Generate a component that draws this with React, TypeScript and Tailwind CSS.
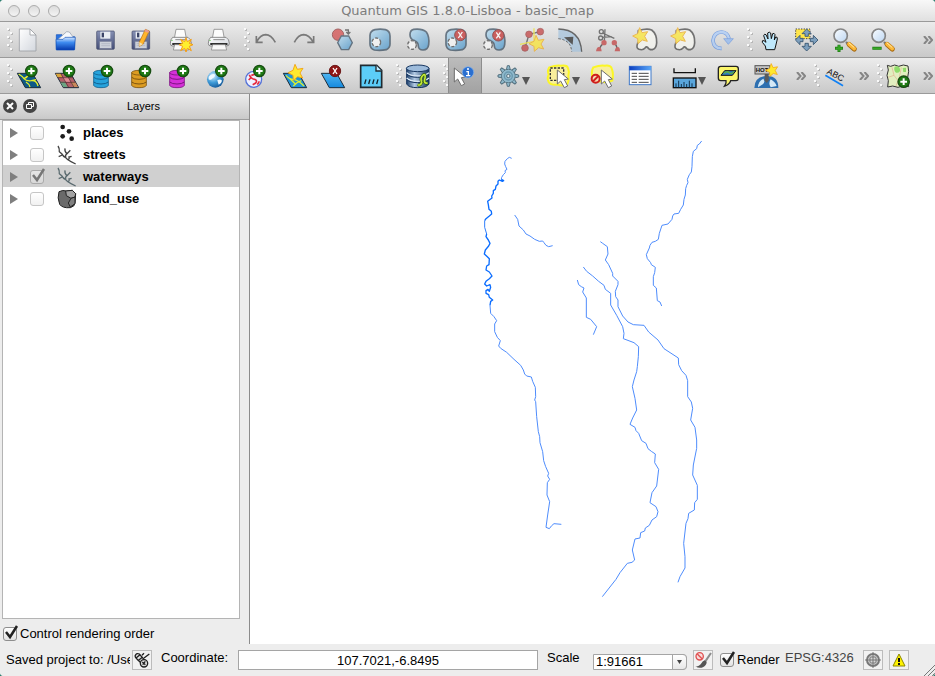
import React, { useState } from "react";
import type { ReactNode } from "react";

/* ---------- icon building blocks (72-unit grid) ---------- */

function Icon({ children, faded = false }: { children: ReactNode; faded?: boolean }) {
  return (
    <svg viewBox="0 0 72 72" className={faded ? "size-6 shrink-0 overflow-visible opacity-70" : "size-6 shrink-0 overflow-visible"} aria-hidden="true">
      {children}
    </svg>
  );
}

function Star({ x, y, s = 1 }: { x: number; y: number; s?: number }) {
  return (
    <path
      transform={`translate(${x} ${y}) scale(${s})`}
      d="M-3-24L4-9L21-12L12 2L20 17L5 13L-8 24L-9 9L-24 1L-9-6Z"
      fill="#ffe92e"
      stroke="#f2a81c"
      strokeWidth="3"
      strokeLinejoin="round"
    />
  );
}

function AddBadge({ x = 46, y = 21 }: { x?: number; y?: number }) {
  return (
    <g>
      <circle cx={x} cy={y} r="17" fill="#1f7a14" stroke="#174d12" strokeWidth="4" />
      <path d={`M${x - 10} ${y}H${x + 10}M${x} ${y - 10}V${y + 10}`} stroke="#fff" strokeWidth="6" />
    </g>
  );
}

function RemoveBadge({ x, y, fill = "#c22a2a" }: { x: number; y: number; fill?: string }) {
  return (
    <g>
      <circle cx={x} cy={y} r="17" fill={fill} stroke="#6d1a1a" strokeWidth="3" />
      <path d={`M${x - 6} ${y - 9}L${x + 6} ${y + 9}M${x + 6} ${y - 9}L${x - 6} ${y + 9}`} stroke="#fff" strokeWidth="4" />
    </g>
  );
}

function DashedRing({ x, y }: { x: number; y: number }) {
  return <circle cx={x} cy={y} r="13" fill="#fafafa" stroke="#444" strokeWidth="4" strokeDasharray="9 5" />;
}

function Cursor({ x, y }: { x: number; y: number }) {
  return (
    <path
      transform={`translate(${x} ${y})`}
      d="M0 0V42L10 33L21 53L31 48L21 29L33 27Z"
      fill="#fff"
      stroke="#6d6d6d"
      strokeWidth="3"
      strokeLinejoin="round"
    />
  );
}

function Floppy({ x }: { x: number }) {
  return (
    <g transform={`translate(${x} 9)`}>
      <rect width="53" height="55" rx="3" fill="url(#floppy)" stroke="#3f4766" strokeWidth="2" />
      <rect x="11" y="2" width="30" height="21" fill="#e9edf3" />
      <rect x="15" y="5" width="7" height="14" fill="#3b4468" />
      <rect x="9" y="31" width="36" height="21" fill="#cdd1da" stroke="#7a809a" strokeWidth="2" />
      <path d="M14 38H40M14 44H40" stroke="#a9afbd" strokeWidth="2" />
    </g>
  );
}

function Printer() {
  return (
    <g>
      <path d="M24 4H50L55 32H19Z" fill="#fcfcfc" stroke="#8c8c8c" strokeWidth="2.5" />
      <path d="M14 28H60Q70 34 70 46Q70 54 62 54H14Q7 54 7 46Q7 34 14 28Z" fill="url(#paper)" stroke="#777" strokeWidth="2.5" />
      <path d="M22 35H56" stroke="#8b8b8b" strokeWidth="3" />
      <path d="M15 48H62" stroke="#2f2f2f" strokeWidth="6" strokeLinecap="round" />
      <path d="M20 50H58L62 66H16Z" fill="#f8f8f8" stroke="#8c8c8c" strokeWidth="2.5" />
      <circle cx="12" cy="37" r="2" fill="#4fc03a" />
    </g>
  );
}

function Database({ fill, dark }: { fill: string; dark: string }) {
  return (
    <g stroke={dark} strokeWidth="2.5">
      <path d="M5 26V64Q8 71 27 71Q46 71 49 64V26Z" fill={fill} />
      <ellipse cx="27" cy="26" rx="22" ry="7" fill={fill} />
      <path d="M5 40Q12 46 27 46T49 40M5 54Q12 60 27 60T49 54" fill="none" strokeWidth="3" />
    </g>
  );
}

function Sheet({ fill, children }: { fill: string; children?: ReactNode }) {
  return (
    <g>
      <path d="M4 28H50L74 71H28Z" fill={fill} stroke="#1c2c3a" strokeWidth="3" />
      {children}
    </g>
  );
}

const blob = "M24 5Q40 2 55 5Q69 9 69 24V48Q69 60 58 65Q40 69 22 66Q9 62 9 48V22Q10 8 24 5Z";
const bean = "M26 4Q52 1 64 12Q74 26 71 50Q69 66 54 66Q41 66 40 54Q40 42 29 38Q15 34 15 20Q15 7 26 4Z";
const cloud = "M16 8Q42 0 56 6Q72 18 71 44Q70 62 58 65Q48 66 44 58Q40 54 36 60Q30 68 18 64Q8 60 14 46Q22 38 14 28Z";
const glow = "M10 10Q30 3 44 5Q64 2 66 12Q71 24 67 36Q70 54 62 62Q48 67 34 62Q14 64 8 54Q2 42 8 32Q3 20 10 10Z";

function Magnifier({ children }: { children: ReactNode }) {
  return (
    <g>
      <path d="M42 42L50 50" stroke="#777" strokeWidth="7" />
      <path d="M51 49L67 63" stroke="#a86a12" strokeWidth="15" strokeLinecap="round" />
      <path d="M51 48L67 62" stroke="#fbb736" strokeWidth="11" strokeLinecap="round" />
      <path d="M51 45L66 58" stroke="#ffe8a8" strokeWidth="3" strokeLinecap="round" />
      <circle cx="26" cy="23" r="20" fill="url(#lens)" stroke="#858585" strokeWidth="5" />
      {children}
    </g>
  );
}

function SharedPaint() {
  return (
    <svg className="absolute size-0" aria-hidden="true">
      <defs>
        <linearGradient id="floppy" x1="0" y1="0" x2="0" y2="1">
          <stop offset="0" stopColor="#8791b4" />
          <stop offset="1" stopColor="#454e78" />
        </linearGradient>
        <linearGradient id="paper" x1="0" y1="0" x2="1" y2="1">
          <stop offset="0" stopColor="#ffffff" />
          <stop offset="1" stopColor="#d3d7de" />
        </linearGradient>
        <linearGradient id="folder" x1="0" y1="0" x2="0" y2="1">
          <stop offset="0" stopColor="#d5e7ff" />
          <stop offset="0.4" stopColor="#3f8cf0" />
          <stop offset="1" stopColor="#0538ac" />
        </linearGradient>
        <linearGradient id="lens" x1="0" y1="0" x2="1" y2="1">
          <stop offset="0" stopColor="#fafdff" />
          <stop offset="1" stopColor="#bcd6f2" />
        </linearGradient>
        <linearGradient id="shape" x1="0" y1="0" x2="1" y2="1">
          <stop offset="0" stopColor="#b5dcf3" />
          <stop offset="1" stopColor="#3d8fc9" />
        </linearGradient>
        <linearGradient id="sky" x1="0" y1="0" x2="0" y2="1">
          <stop offset="0" stopColor="#4fb6f2" />
          <stop offset="1" stopColor="#1489de" />
        </linearGradient>
        <radialGradient id="globe" cx="0.35" cy="0.3" r="0.8">
          <stop offset="0" stopColor="#d6f0ff" />
          <stop offset="0.5" stopColor="#3f9bd8" />
          <stop offset="1" stopColor="#0f4f8f" />
        </radialGradient>
        <linearGradient id="steel" x1="0" y1="0" x2="1" y2="0">
          <stop offset="0" stopColor="#1c3f6c" />
          <stop offset="0.35" stopColor="#b3cbe4" />
          <stop offset="1" stopColor="#15365f" />
        </linearGradient>
        <linearGradient id="head" x1="0" y1="0" x2="1" y2="0">
          <stop offset="0" stopColor="#0c3fc0" />
          <stop offset="1" stopColor="#58a6f8" />
        </linearGradient>
      </defs>
    </svg>
  );
}

/* ---------- toolbar contents ---------- */

type Tool = { label: string; art: ReactNode };

const fileTools: Tool[] = [
  {
    label: "New project",
    art: (
      <>
        <path d="M10 3H42L60 21V69H10Z" fill="url(#paper)" stroke="#9b9fa4" strokeWidth="2.5" />
        <path d="M42 3V21H60Z" fill="#fff" stroke="#9b9fa4" strokeWidth="2.5" />
      </>
    ),
  },
  {
    label: "Open project",
    art: (
      <>
        <path d="M7 20H24L29 26H62V64H7Z" fill="#2a73e2" stroke="#1150b8" strokeWidth="2" />
        <path d="M12 34L38 11L46 12L58 28V38H12Z" fill="#f6f8fb" stroke="#8a94a5" strokeWidth="2" />
        <path d="M6 34H27L33 28H64L61 66H7Z" fill="url(#folder)" stroke="#1150b8" strokeWidth="2" />
      </>
    ),
  },
  { label: "Save project", art: <Floppy x={14} /> },
  {
    label: "Save project as",
    art: (
      <>
        <Floppy x={6} />
        <path d="M46 4L58 9L39 49L28 55L28 42Z" fill="#ffb52c" stroke="#b56d10" strokeWidth="2" />
        <path d="M46 4L58 9L55 15L43 10Z" fill="#e89a8c" />
        <path d="M28 42L39 49L28 55Z" fill="#f6dfae" />
      </>
    ),
  },
  {
    label: "New print composer",
    art: (
      <>
        <Printer />
        <path d="M54 29L58 41L70 34L64 46L75 50L64 55L70 68L58 61L54 72L50 61L38 68L44 55L33 50L44 46L38 34L50 41Z" fill="#fff02e" stroke="#f59b16" strokeWidth="3" />
      </>
    ),
  },
  { label: "Composer manager", art: <Printer /> },
];

const editTools: Tool[] = [
  {
    label: "Undo",
    art: (
      <path d="M67 43Q54 20 38 20Q22 21 11 41M10 24V43H29" fill="none" stroke="#505050" strokeWidth="5" />
    ),
  },
  {
    label: "Redo",
    art: (
      <path d="M10 43Q22 20 38 20Q54 21 66 41M68 24V43H49" fill="none" stroke="#505050" strokeWidth="5" />
    ),
  },
  {
    label: "Simplify feature",
    art: (
      <>
        <circle cx="27" cy="20" r="17" fill="#d24545" stroke="#8a3030" strokeWidth="3" />
        <path d="M37 24H59L70 44L59 65H37L26 44Z" fill="url(#shape)" stroke="#34495c" strokeWidth="4" />
        <path d="M48 6H58V16M52 12L58 18L64 12" fill="none" stroke="#444" strokeWidth="4" />
      </>
    ),
  },
  {
    label: "Add ring",
    art: (
      <>
        <path d={blob} fill="url(#shape)" stroke="#34495c" strokeWidth="5" />
        <DashedRing x={28} y={43} />
      </>
    ),
  },
  {
    label: "Add part",
    art: (
      <>
        <path d={bean} fill="url(#shape)" stroke="#34495c" strokeWidth="5" />
        <DashedRing x={21} y={51} />
      </>
    ),
  },
  {
    label: "Delete ring",
    art: (
      <>
        <path d={blob} fill="url(#shape)" stroke="#34495c" strokeWidth="5" />
        <DashedRing x={28} y={43} />
        <RemoveBadge x={52} y={21} />
      </>
    ),
  },
  {
    label: "Delete part",
    art: (
      <>
        <path d={bean} fill="url(#shape)" stroke="#34495c" strokeWidth="5" />
        <DashedRing x={21} y={51} />
        <RemoveBadge x={52} y={22} />
      </>
    ),
  },
  {
    label: "Reshape features",
    art: (
      <>
        <path d="M64 11L30 19L18 60" fill="none" stroke="#444" strokeWidth="4" />
        <path d="M45 1V40L3 49" fill="none" stroke="#f4e628" strokeWidth="4" />
        <g fill="#c23b3b" stroke="#8a2c2c" strokeWidth="2">
          <circle cx="30" cy="19" r="10" />
          <circle cx="64" cy="11" r="10" />
          <circle cx="18" cy="60" r="10" />
        </g>
        <Star x={54} y={46} />
      </>
    ),
  },
  {
    label: "Offset curve",
    art: (
      <>
        <path d="M4 3Q70 4 74 71H44Q42 36 4 32Z" fill="#a4c3de" />
        <path d="M4 3Q70 4 74 71" fill="none" stroke="#333" strokeWidth="4" />
        <path d="M4 32Q42 36 44 71" fill="none" stroke="#333" strokeWidth="3" strokeDasharray="7 5" />
        <path d="M21 28L49 26L47 50Z" fill="#222" />
      </>
    ),
  },
  {
    label: "Split features",
    art: (
      <>
        <path d="M11 66Q16 52 28 44M67 66Q66 52 56 43" fill="none" stroke="#333" strokeWidth="4" />
        <path d="M22 15L58 31M22 28L50 26M30 4L28 40" fill="none" stroke="#444" strokeWidth="4" />
        <circle cx="19" cy="11" r="6" fill="none" stroke="#444" strokeWidth="4" />
        <circle cx="17" cy="30" r="6" fill="none" stroke="#444" strokeWidth="4" />
        <g fill="#c23b3b">
          <circle cx="27" cy="44" r="8" />
          <circle cx="58" cy="44" r="8" />
          <path d="M3 70Q5 57 12 57T20 70ZM59 70Q61 57 68 57T75 70Z" />
        </g>
      </>
    ),
  },
  {
    label: "Merge selected features",
    art: (
      <>
        <path d={cloud} fill="#fbfbf5" stroke="#444" strokeWidth="5" />
        <Star x={23} y={23} />
      </>
    ),
  },
  {
    label: "Merge attributes",
    art: (
      <>
        <path d={cloud} fill="#fbfbf5" stroke="#444" strokeWidth="5" />
        <Star x={23} y={23} />
      </>
    ),
  },
  {
    label: "Rotate point symbols",
    art: (
      <>
        <path d="M38 61Q14 62 12 38Q14 13 38 12Q56 13 60 32" fill="none" stroke="#4c82dc" strokeWidth="11" />
        <path d="M38 61Q14 62 12 38Q14 13 38 12Q56 13 60 32" fill="none" stroke="#a9cbfa" strokeWidth="7" />
        <path d="M44 32H73L58 49Z" fill="#8db8f4" stroke="#4c82dc" strokeWidth="2" />
      </>
    ),
  },
];

const viewTools: Tool[] = [
  {
    label: "Pan map",
    art: (
      <path
        d="M30 65L28 54L19 43Q17 36 24 38L30 43L23 23Q25 16 30 20L36 33L35 15Q40 10 44 15L46 32L50 17Q55 14 57 20L55 36L59 27Q65 26 64 33L59 54L56 65Z"
        fill="#bfe8fb"
        stroke="#111"
        strokeWidth="3"
        strokeLinejoin="round"
      />
    ),
  },
  {
    label: "Pan map to selection",
    art: (
      <>
        <path d="M5 3H48V32H5Z" fill="#ffe54a" stroke="#444" strokeWidth="3" strokeDasharray="4 4" />
        <g fill="#7d9fbd" stroke="#34526e" strokeWidth="2.5">
          <path d="M38 3L52 17H43V25H33V17H24Z" />
          <path d="M38 69L52 55H43V46H33V55H24Z" />
          <path d="M4 36L18 22V31H27V41H18V50Z" />
          <path d="M72 36L58 22V31H49V41H58V50Z" />
        </g>
      </>
    ),
  },
  {
    label: "Zoom in",
    art: (
      <Magnifier>
        <path d="M9 61H33M21 50V72" stroke="#1f7d14" strokeWidth="9" />
        <path d="M11 61H31M21 52V70" stroke="#36a825" strokeWidth="5" />
      </Magnifier>
    ),
  },
  {
    label: "Zoom out",
    art: (
      <Magnifier>
        <path d="M7 61H35" stroke="#1f7d14" strokeWidth="9" />
        <path d="M9 61H33" stroke="#36a825" strokeWidth="5" />
      </Magnifier>
    ),
  },
];

const layerTools: Tool[] = [
  {
    label: "Add vector layer",
    art: (
      <>
        <Sheet fill="#0e5a86">
          <path d="M8 30Q18 36 24 44T46 50T66 66M24 44Q34 40 38 32M30 54Q40 60 42 69M46 50L60 47" fill="none" stroke="#e6f02c" strokeWidth="4" />
        </Sheet>
        <AddBadge />
      </>
    ),
  },
  {
    label: "Add raster layer",
    art: (
      <>
        <Sheet fill="#b4606a">
          <path d="M5 29H20L26 40H11Z" fill="#d9a43a" />
          <path d="M26 40H42L50 54H34Z" fill="#e38c94" />
          <path d="M18 53H32L41 69H28Z" fill="#6aa583" />
          <path d="M50 54H64L72 69H58Z" fill="#c9885a" />
          <path d="M11 41H58M19 55H66M20 28L44 70M36 28L60 70" stroke="#4c2a30" strokeWidth="2" />
        </Sheet>
        <AddBadge x={45} />
      </>
    ),
  },
  { label: "Add PostGIS layer", art: (<><Database fill="#27a3dc" dark="#12618f" /><AddBadge x={45} /></>) },
  { label: "Add SpatiaLite layer", art: (<><Database fill="#dc9c22" dark="#7d5410" /><AddBadge x={45} /></>) },
  { label: "Add MSSQL layer", art: (<><Database fill="#d530d8" dark="#7c1580" /><AddBadge x={45} /></>) },
  {
    label: "Add WMS layer",
    art: (
      <>
        <circle cx="28" cy="46" r="25" fill="url(#globe)" />
        <path d="M8 38Q18 26 28 32Q26 42 18 44Q14 50 8 46ZM34 48Q44 44 48 50Q46 60 38 62Q35 54 34 48Z" fill="#eef8ff" />
        <AddBadge />
      </>
    ),
  },
  {
    label: "Add WFS layer",
    art: (
      <>
        <circle cx="29" cy="46" r="24" fill="#eef1ff" stroke="#5673d8" strokeWidth="4" />
        <path d="M16 32Q20 44 32 46Q42 50 34 58L26 62M22 34L36 30M14 48L20 42M40 62L46 52" fill="none" stroke="#e5283c" strokeWidth="5" />
        <AddBadge />
      </>
    ),
  },
  {
    label: "New shapefile layer",
    art: (
      <>
        <Sheet fill="#2295d8">
          <path d="M12 34Q22 46 34 46T66 66M24 44L40 60M34 66Q44 54 58 50" fill="none" stroke="#dff02c" strokeWidth="4" />
        </Sheet>
        <Star x={42} y={25} />
      </>
    ),
  },
  { label: "Remove layer", art: (<><Sheet fill="url(#sky)" /><RemoveBadge x={45} y={21} fill="#8f1616" /></>) },
  {
    label: "Add delimited text layer",
    art: (
      <>
        <path d="M8 4H56L71 19V70H8Z" fill="#5ccdf8" stroke="#202a30" strokeWidth="5" />
        <path d="M54 4V21H71" fill="#bdeaff" stroke="#202a30" strokeWidth="4" />
        <path d="M24 46L20 60M36 46L32 60M48 46L44 60M60 46L56 60" stroke="#15242c" strokeWidth="4" />
      </>
    ),
  },
];

const databaseTools: Tool[] = [
  {
    label: "DB manager",
    art: (
      <>
        <path d="M5 13V60Q10 71 38 71T72 60V13Z" fill="url(#steel)" stroke="#173660" strokeWidth="3" />
        <ellipse cx="38" cy="13" rx="34" ry="10" fill="#9dbbdb" stroke="#173660" strokeWidth="3" />
        <path d="M5 26Q14 36 38 36T72 26M5 42Q14 52 38 52T72 42" fill="none" stroke="#dbe8f5" strokeWidth="4" />
        <path d="M5 30Q14 40 38 40T72 30M5 46Q14 56 38 56T72 46" fill="none" stroke="#173660" strokeWidth="3" />
        <path d="M38 62Q46 66 50 56Q44 42 56 32Q62 30 60 42Q54 60 68 57" fill="none" stroke="#2c5a12" strokeWidth="9" />
        <path d="M38 62Q46 66 50 56Q44 42 56 32Q62 30 60 42Q54 60 68 57" fill="none" stroke="#c3e83a" strokeWidth="5" />
      </>
    ),
  },
];

const gearTeeth = [0, 45, 90, 135, 180, 225, 270, 315];

const actionTools: Tool[] = [
  {
    label: "Run feature action",
    art: (
      <>
        <g fill="#8fb9cc" stroke="#55717f" strokeWidth="3">
          {gearTeeth.map((a) => (
            <path key={a} transform={`rotate(${a} 37 36)`} d="M31 18L34 5H40L43 18Z" />
          ))}
          <circle cx="37" cy="36" r="20" />
        </g>
        <circle cx="37" cy="36" r="19" fill="#8fb9cc" />
        <circle cx="37" cy="36" r="12" fill="none" stroke="#6a98ae" strokeWidth="4" />
        <circle cx="37" cy="36" r="5" fill="#e4ecef" stroke="#55717f" strokeWidth="3" />
      </>
    ),
  },
  {
    label: "Select features",
    art: (
      <>
        <path d={glow} fill="#f8ee9c" stroke="#fbf626" strokeWidth="6" />
        <rect x="13" y="12" width="40" height="37" fill="none" stroke="#333" strokeWidth="4" strokeDasharray="7 4" />
        <Cursor x={34} y={18} />
      </>
    ),
  },
];

const selectionTools: Tool[] = [
  {
    label: "Deselect features",
    art: (
      <>
        <path d="M10 10Q30 3 44 5Q64 2 66 16Q71 30 67 50Q48 58 34 52Q14 54 8 44Q2 22 10 10Z" fill="#f8ee9c" stroke="#fbf626" strokeWidth="6" />
        <circle cx="17" cy="44" r="12" fill="#f6d9b0" stroke="#cf1d1d" strokeWidth="6" />
        <path d="M9 52L25 36" stroke="#cf1d1d" strokeWidth="6" />
        <Cursor x={34} y={18} />
      </>
    ),
  },
  {
    label: "Open attribute table",
    art: (
      <>
        <rect x="4" y="7" width="65" height="55" fill="#fff" stroke="#3f78c8" strokeWidth="3" />
        <rect x="4" y="7" width="65" height="12" fill="url(#head)" />
        <path d="M11 28H27M11 37H27M11 46H27M11 55H27M32 28H62M32 37H62M32 46H62M32 55H62" stroke="#4a4a4a" strokeWidth="3" />
      </>
    ),
  },
];

const measureTools: Tool[] = [
  {
    label: "Measure line",
    art: (
      <>
        <path d="M6 13V26H70V13" fill="none" stroke="#111" strokeWidth="4" />
        <rect x="4" y="42" width="68" height="29" fill="#5aa6dc" stroke="#111" strokeWidth="4" />
        <path d="M12 58V70M20 50V70M28 60V70M36 54V70M44 60V70M52 50V70M60 58V70" stroke="#12324c" strokeWidth="3" />
      </>
    ),
  },
];

const noteTools: Tool[] = [
  {
    label: "Map tips",
    art: (
      <>
        <path d="M14 7H60Q67 7 67 14V42Q67 50 60 50H44Q40 62 26 66Q32 58 30 50H14Q7 50 7 42V14Q7 7 14 7Z" fill="#fbf56a" stroke="#222" strokeWidth="4" />
        <path d="M26 20H60L49 34H15Z" fill="#2f7fc0" stroke="#111" strokeWidth="3" />
        <path d="M24 28Q34 20 40 26T54 22" fill="none" stroke="#5fae3a" strokeWidth="4" />
      </>
    ),
  },
  {
    label: "Hotlink",
    art: (
      <>
        <path d="M1 72Q1 38 37 36T73 72Z" fill="#2d6fb0" />
        <path d="M12 70Q12 52 28 44Q36 56 24 62ZM50 46Q64 54 68 66L50 70Q42 58 50 46Z" fill="#d4e8f6" />
        <path d="M32 30H44V50L38 57L32 50Z" fill="#5a5a5a" />
        <rect x="3" y="5" width="44" height="25" fill="#c4c4c4" stroke="#555" strokeWidth="3" />
        <text x="5" y="24" fontSize="18" fontWeight="700" fill="#111" className="font-['Liberation_Sans',sans-serif]">HOT</text>
        <Star x={54} y={18} s={0.8} />
      </>
    ),
  },
];

const labelTools: Tool[] = [
  {
    label: "Labeling",
    art: (
      <>
        <path d="M7 34L60 65" stroke="#1080f4" strokeWidth="5" />
        <text x="10" y="28" fontSize="26" fill="#111" transform="rotate(28 10 28)" className="font-['Liberation_Sans',sans-serif]">ABC</text>
      </>
    ),
  },
];

const pluginTools: Tool[] = [
  {
    label: "OpenLayers overview",
    art: (
      <>
        <path d="M4 4L14 7L26 3L38 7L52 3L66 6L68 22L65 40L68 68L50 66L36 70L20 66L5 69L7 50L3 34L7 18Z" fill="#e2efc0" stroke="#333" strokeWidth="3" />
        <path d="M26 8Q40 4 42 16Q44 28 30 26Q22 18 26 8ZM50 12L60 11V24H52Z" fill="#8fdc6a" />
        <path d="M6 40L24 34L36 50L30 66M24 34L18 10M46 10L40 40L62 34" fill="none" stroke="#e2b08e" strokeWidth="2" />
        <AddBadge x={53} y={53} />
      </>
    ),
  },
];

/* ---------- toolbar widgets ---------- */

function Grip() {
  return (
    <svg width="6" height="24" viewBox="0 0 6 24" className="mr-[3px] shrink-0" aria-hidden="true">
      {[0, 1, 2, 3, 4, 5].map((i) => (
        <g key={i}>
          <rect x={i % 2 ? 4 : 1} y={i * 4 + 1} width="2" height="2" fill="#b8b8b8" />
          <rect x={i % 2 ? 3 : 0} y={i * 4} width="2" height="2" fill="#fafafa" />
        </g>
      ))}
    </svg>
  );
}

function ToolGroup({ tools, disabled = false }: { tools: Tool[]; disabled?: boolean }) {
  return (
    <div className="flex items-center gap-[14px]">
      {tools.map((t) => (
        <button key={t.label} type="button" aria-label={t.label} disabled={disabled} className="flex size-6 shrink-0 items-center justify-center">
          <Icon faded={disabled}>{t.art}</Icon>
        </button>
      ))}
    </div>
  );
}

function MenuGroup({ tools }: { tools: Tool[] }) {
  return (
    <div className="flex items-center gap-4">
      {tools.map((t) => (
        <button key={t.label} type="button" aria-label={t.label} className="flex shrink-0 items-center gap-[2px]">
          <Icon>{t.art}</Icon>
          <svg width="8" height="8" viewBox="0 0 8 8" className="mt-2.5" aria-hidden="true">
            <path d="M0 0H8L4 8Z" fill="#555" />
          </svg>
        </button>
      ))}
    </div>
  );
}

function More({ className = "" }: { className?: string }) {
  return (
    <button type="button" aria-label="More tools" className={`flex shrink-0 items-center ${className}`}>
      <svg width="10" height="8" viewBox="0 0 10 8" fill="none" stroke="#858585" strokeWidth="2" aria-hidden="true">
        <path d="M1 0L4.500 4L1 8M5.500 0L9 4L5.500 8" />
      </svg>
    </button>
  );
}

const bar = "flex h-9 shrink-0 items-center border-b border-[#9a9a9a] bg-linear-to-b from-[#ececec] to-[#c9c9c9] pr-0.5 pl-[7px]";

/* ---------- layers ---------- */

const branch = "M3 3Q8 10 7 20L14 26Q18 34 26 38Q32 46 42 50L56 57M16 30L5 35M26 38Q24 30 30 26Q22 20 24 10M30 26L40 16M34 45Q38 40 36 36L44 34";

const layerArt: Record<string, ReactNode> = {
  places: (
    <g fill="#1c1c1c">
      <circle cx="17" cy="12" r="7" />
      <circle cx="36" cy="25" r="7" />
      <circle cx="17" cy="40" r="7" />
      <circle cx="44" cy="47" r="7" />
    </g>
  ),
  streets: <path d={branch} fill="none" stroke="#444" strokeWidth="4" />,
  waterways: <path d={branch} fill="none" stroke="#5b6b70" strokeWidth="4" />,
  land_use: (
    <g stroke="#222" strokeWidth="3">
      <path d="M6 8Q18 2 28 6L46 4L56 14L54 42Q54 52 40 56Q16 58 8 46Q0 26 6 8Z" fill="#6a6a6a" />
      <path d="M26 6L46 4L56 14L54 24L42 28L28 20Z" fill="#a2a2a2" />
      <path d="M42 28L54 24V44L40 54L34 42Z" fill="#808080" />
    </g>
  ),
};

const layerNames = ["places", "streets", "waterways", "land_use"];

function Tick({ color }: { color: string }) {
  return (
    <svg viewBox="0 0 16 16" className="pointer-events-none absolute bottom-0 left-0 size-4 opacity-0 peer-checked:opacity-100" aria-hidden="true">
      <path d="M3 7L7 12L14 1" fill="none" stroke={color} strokeWidth="2.500" />
    </svg>
  );
}

function CheckBox({ id, checked, onChange, light = false }: { id: string; checked: boolean; onChange: () => void; light?: boolean }) {
  return (
    <span className="relative flex size-[14px] shrink-0">
      <input
        id={id}
        type="checkbox"
        checked={checked}
        onChange={onChange}
        className={
          light
            ? "peer size-[14px] appearance-none rounded-[3px] border border-[#c6c6c6] bg-linear-to-b from-white to-[#f1f1f1] checked:border-[#aaaaaa] checked:from-[#e6e6e6] checked:to-[#d8d8d8]"
            : "peer size-[14px] appearance-none rounded-[3px] border border-[#8e8e8e] bg-linear-to-b from-white to-[#e2e2e2]"
        }
      />
      <Tick color={light ? "#777" : "#222"} />
    </span>
  );
}

function LayersPanel() {
  const [visible, setVisible] = useState<string[]>(["waterways"]);
  const [ordered, setOrdered] = useState(true);
  const toggle = (n: string) => setVisible((v) => (v.includes(n) ? v.filter((x) => x !== n) : [...v, n]));
  return (
    <aside className="flex w-[250px] shrink-0 flex-col border-r border-[#8c8c8c] bg-[#ededed]">
      <header className="flex h-[26px] shrink-0 items-center border-b border-[#9d9d9d] bg-linear-to-b from-[#ececec] to-[#c9c9c9] pl-[3px] pb-px">
        <div className="flex w-[35px] gap-[6px]">
          <button type="button" aria-label="Close panel" className="size-[14px]">
            <svg viewBox="0 0 14 14" aria-hidden="true">
              <circle cx="7" cy="7" r="7" fill="#444" />
              <path d="M4 4L10 10M10 4L4 10" stroke="#fff" strokeWidth="2" />
            </svg>
          </button>
          <button type="button" aria-label="Float panel" className="size-[14px]">
            <svg viewBox="0 0 14 14" aria-hidden="true">
              <circle cx="7" cy="7" r="7" fill="#444" />
              <path d="M5.500 5.500V3.500H10.500V7.500H8.500M3.500 5.500H8.500V9.500H3.500Z" fill="none" stroke="#fff" strokeWidth="1" />
            </svg>
          </button>
        </div>
        <h2 className="flex-1 text-center text-[11px] leading-4">Layers</h2>
      </header>
      <ul className="mr-[9px] ml-[2px] flex-1 border border-[#b4b4b4] bg-white">
        {layerNames.map((n) => (
          <li key={n} className={n === "waterways" ? "flex h-[22px] items-center bg-[#d0d0d0] pt-[2px] pl-[7px]" : "flex h-[22px] items-center pt-[2px] pl-[7px]"}>
            <button type="button" aria-label={`Expand ${n}`} className="mr-3">
              <svg width="8" height="10" viewBox="0 0 8 10" aria-hidden="true">
                <path d="M0 0L8 5L0 10Z" fill="#7f7f7f" />
              </svg>
            </button>
            <CheckBox id={`layer-${n}`} checked={visible.includes(n)} onChange={() => toggle(n)} light />
            <label htmlFor={`layer-${n}`} className="ml-[13px] flex items-center gap-[6px] text-[13px] leading-4 font-bold">
              <svg width="20" height="20" viewBox="0 0 60 60" aria-hidden="true">
                {layerArt[n]}
              </svg>
              {n}
            </label>
          </li>
        ))}
      </ul>
      <div className="flex h-[25px] shrink-0 items-center gap-[3px] pt-1 pl-[3px]">
        <CheckBox id="render-order" checked={ordered} onChange={() => setOrdered(!ordered)} />
        <label htmlFor="render-order" className="text-[13px] leading-4">
          Control rendering order
        </label>
      </div>
    </aside>
  );
}

/* ---------- map ---------- */

function MapCanvas() {
  return (
    <main className="min-w-0 flex-1 bg-white">
      <svg viewBox="250 94 685 550" className="size-full" role="img" aria-label="Waterways map" fill="none" stroke="#4d8cfc" strokeWidth="3" strokeLinejoin="round">
        <g transform="translate(470 140) scale(0.33333)">
          <path d="M125 55L118 52L112 56L105 64L104 72L107 80L111 88L105 92L106 98L100 104L95 112L94 118" />
          <path stroke="#0b6dff" strokeWidth="4" d="M94 118L101 122L97 124L88 120L84 124L84 132L78 138L76 148L70 152L70 160L65 168L66 174L58 180L53 184L55 194L57 208L64 214L65 222L58 228L48 236L44 242" />
          <path stroke="#2f7dfa" d="M44 242L44 262L50 282" />
          <path stroke="#0b6dff" strokeWidth="4" d="M50 282L48 290L55 300L60 310L56 318L46 330L43 342L52 350L58 356L57 374L50 378L48 390L58 396L66 408L58 416L48 424L44 432L50 438L60 434L62 442L58 454L54 448L48 452L48 460L56 464L58 472L68 480L62 484L60 496" />
          <path d="M60 496L62 520L72 530L80 542L74 552L74 575L82 592L91 602L86 618L92 625L110 637L132 658" />
          <path d="M134 225L143 238L147 258L160 270L168 282L180 288L194 298L208 304L218 303L222 308L228 316L236 320L248 317" />
        </g>
        <g transform="translate(570 130) scale(0.33333)">
          <path d="M395 33L388 42L382 46L380 56L370 64L367 80L366 110L364 126L358 134L352 148L354 158L350 166L347 176L346 195L342 208L340 225L332 238L326 250L312 252L308 258L306 268L294 282L276 286L268 310L265 328L256 334L246 337L240 346L238 354L229 374L232 386L242 398L244 404L256 412L254 428L250 440L250 466L259 474L262 512L270 516L275 528" />
          <path d="M91 335L98 340L112 350L114 372L106 390L116 404L128 430L128 438L144 454L144 464L136 484L137 500L144 510L144 530L158 558L174 576L190 584L222 586L236 606L264 630" />
          <path d="M40 411L50 424L68 438L86 454L102 466L106 478L122 490L122 525L140 556L158 590L162 610L160 626L192 638L206 650" />
          <path d="M22 450L26 464L34 470L42 474L38 486L49 504L49 562L62 568L80 590L70 614" />
        </g>
        <g transform="translate(500 340) scale(0.33333)">
          <path d="M42 58L62 76L70 90L74 102L80 108L94 111L98 124L106 142L107 170L104 180L107 185L110 230L115 275L119 290L120 308L128 335L131 362L137 380L146 400L143 408L149 418L142 428L141 465L149 485L143 525L138 562L148 566L155 557L162 551L184 553" />
          <path d="M474 0L492 26L535 54L536 74L545 92L558 106L563 122L563 170L574 186L578 205L572 240L585 262L590 300L590 325L580 375L578 405L592 436L592 478L584 488L583 510L566 520L564 536L558 550L551 610L555 650L555 684L540 710L534 727" />
          <path d="M416 20L415 50L412 80L410 95L402 120L397 140L405 175L410 210L398 234L390 253L405 262L408 272L416 280L425 302L438 310L444 326L454 334L466 342L464 368L476 388L470 438L456 458L450 488L468 500L474 515L470 530L456 540L448 556L436 564L434 573L422 578L420 594L405 597L397 630L404 660L396 667L382 670L360 698L348 718L307 770" />
        </g>
      </svg>
    </main>
  );
}

/* ---------- status bar ---------- */

const statusButton = "flex size-5 shrink-0 items-center justify-center border border-[#bcbcbc] bg-[#f2f2f2]";

function StatusBar() {
  const [render, setRender] = useState(true);
  return (
    <footer className="flex h-8 shrink-0 items-center bg-[#ededed] pl-[6px] text-[13px] leading-4">
      <span className="w-[124px] shrink-0 overflow-hidden whitespace-nowrap">Saved project to: /Use</span>
      <button type="button" aria-label="Toggle extents and mouse position" className={`${statusButton} ml-[2px]`}>
        <svg width="16" height="16" viewBox="0 0 48 48" fill="none" stroke="#222" strokeWidth="4" aria-hidden="true">
          <path d="M4 10Q8 2 16 6L32 24Q32 34 20 32L8 20Q2 16 4 10Z" fill="#e2e2e2" />
          <path d="M18 8L6 18M25 16L12 26" />
          <circle cx="30" cy="34" r="11" fill="#e2e2e2" />
          <path d="M25 30L34 38M34 28L26 38M24 10L30 4M30 18L46 6" />
        </svg>
      </button>
      <label htmlFor="coordinate" className="ml-[9px] w-[77px] shrink-0 pb-1">
        Coordinate:
      </label>
      <input id="coordinate" defaultValue="107.7021,-6.8495" className="h-5 min-w-0 flex-1 border border-[#a5a5a5] bg-white text-center text-[13px] leading-4 outline-none" />
      <label htmlFor="scale" className="ml-[9px] w-[46px] shrink-0 pb-1">
        Scale
      </label>
      <div className="relative mt-1 w-[94px] shrink-0">
        <select id="scale" defaultValue="1:91661" className="block h-4 w-full appearance-none rounded-r-[4px] border border-[#a5a5a5] bg-white pl-[2px] text-[13px] leading-[14px] outline-none">
          <option>1:91661</option>
          <option>1:50000</option>
        </select>
        <span className="pointer-events-none absolute inset-y-0 right-0 flex w-[15px] items-center justify-center rounded-r-[4px] border border-[#a5a5a5] bg-linear-to-b from-white to-[#e8e8e8]">
          <svg width="5" height="4" viewBox="0 0 5 4" aria-hidden="true">
            <path d="M0 0H5L2.500 4Z" fill="#444" />
          </svg>
        </span>
      </div>
      <button type="button" aria-label="Stop rendering" className={`${statusButton} ml-[6px]`}>
        <svg width="18" height="18" viewBox="0 0 54 54" aria-hidden="true">
          <path d="M51 6L32 34" stroke="#8c8c8c" strokeWidth="6" />
          <path d="M32 28Q26 30 20 40Q14 48 4 46Q16 54 28 48Q38 42 38 33Z" fill="#555" />
          <circle cx="17" cy="16" r="11" fill="#f8dcdc" stroke="#e05050" strokeWidth="4" />
          <path d="M10 9L24 23" stroke="#e05050" strokeWidth="4" />
        </svg>
      </button>
      <div className="ml-[7px] flex shrink-0 items-center gap-[3px]">
        <CheckBox id="render" checked={render} onChange={() => setRender(!render)} />
        <label htmlFor="render" className="w-12">
          Render
        </label>
      </div>
      <span className="w-[78px] shrink-0 pb-1 text-[#444]">EPSG:4326</span>
      <button type="button" aria-label="CRS status" className={statusButton}>
        <svg width="16" height="16" viewBox="0 0 16 16" fill="none" stroke="#777" aria-hidden="true">
          <circle cx="8" cy="8" r="6" fill="#d6d6d6" strokeWidth="2" />
          <path d="M0 8H16M8 0V16" strokeWidth="1" />
          <rect x="5" y="5" width="6" height="6" rx="1" />
        </svg>
      </button>
      <button type="button" aria-label="Messages" className={`${statusButton} ml-[6px]`}>
        <svg width="14" height="14" viewBox="0 0 14 14" aria-hidden="true">
          <path d="M7 1L13 13H1Z" fill="#fff200" stroke="#8a8600" strokeWidth="1" strokeLinejoin="round" />
          <path d="M7 5V9M7 10V12" stroke="#111" strokeWidth="2" />
        </svg>
      </button>
      <svg width="12" height="12" viewBox="0 0 12 12" className="ml-[14px] shrink-0 self-end" stroke="#777" strokeWidth="1" aria-hidden="true">
        <path d="M1 12L12 1M5 12L12 5M9 12L12 9" />
      </svg>
    </footer>
  );
}

/* ---------- window ---------- */

export default function App() {
  return (
    <div className="h-screen bg-[#2c7f70] font-['Liberation_Sans',Arial,sans-serif] text-black">
      <SharedPaint />
      <div className="flex h-full flex-col overflow-hidden rounded-[4px] bg-[#ededed]">
        <header className="flex h-[22px] shrink-0 items-center border-b border-[#9a9a9a] bg-linear-to-b from-[#f8f8f8] to-[#e0e0e0] px-2">
          <div className="flex flex-1 gap-2">
            {["Close", "Minimize", "Zoom"].map((n) => (
              <button key={n} type="button" aria-label={n} className="size-3 rounded-full border border-[#acacac] bg-linear-to-b from-[#dcdcdc] to-[#f4f4f4]" />
            ))}
          </div>
          <h1 className="font-['DejaVu_Sans',sans-serif] text-[13px] leading-4 whitespace-nowrap text-[#7c7c7c]">Quantum GIS 1.8.0-Lisboa - basic_map</h1>
          <div className="flex-1" />
        </header>

        <div className={bar} role="toolbar" aria-label="File and editing">
          <Grip />
          <ToolGroup tools={fileTools} />
          <div className="w-[14px] shrink-0" />
          <Grip />
          <ToolGroup tools={editTools} disabled />
          <div className="w-[14px] shrink-0" />
          <Grip />
          <ToolGroup tools={viewTools} />
          <More className="ml-auto" />
        </div>

        <div className={bar} role="toolbar" aria-label="Layers and attributes">
          <Grip />
          <ToolGroup tools={layerTools} />
          <div className="w-[14px] shrink-0" />
          <Grip />
          <ToolGroup tools={databaseTools} />
          <div className="w-[14px] shrink-0" />
          <Grip />
          <button type="button" aria-label="Identify features" aria-pressed="true" className="-ml-1 flex w-[34px] shrink-0 items-center justify-center self-stretch border-x border-[#8d8d8d] bg-linear-to-b from-[#bcbcbc] to-[#a2a2a2]">
            <Icon>
              <Cursor x={4} y={12} />
              <circle cx="45" cy="25" r="17" fill="#2a6fd0" stroke="#7fb0ee" strokeWidth="2" />
              <path d="M40 23H46V34M39 35H52" fill="none" stroke="#fff" strokeWidth="4" />
              <circle cx="45" cy="15" r="3" fill="#fff" />
            </Icon>
          </button>
          <div className="w-[14px] shrink-0" />
          <MenuGroup tools={actionTools} />
          <div className="w-[10px] shrink-0" />
          <ToolGroup tools={selectionTools} />
          <div className="w-5 shrink-0" />
          <MenuGroup tools={measureTools} />
          <div className="w-[10px] shrink-0" />
          <ToolGroup tools={noteTools} />
          <More className="mr-2 ml-[18px]" />
          <Grip />
          <ToolGroup tools={labelTools} />
          <More className="mr-2 ml-[12px]" />
          <Grip />
          <ToolGroup tools={pluginTools} />
          <More className="ml-auto" />
        </div>

        <div className="flex min-h-0 flex-1">
          <LayersPanel />
          <MapCanvas />
        </div>
        <StatusBar />
      </div>
    </div>
  );
}
